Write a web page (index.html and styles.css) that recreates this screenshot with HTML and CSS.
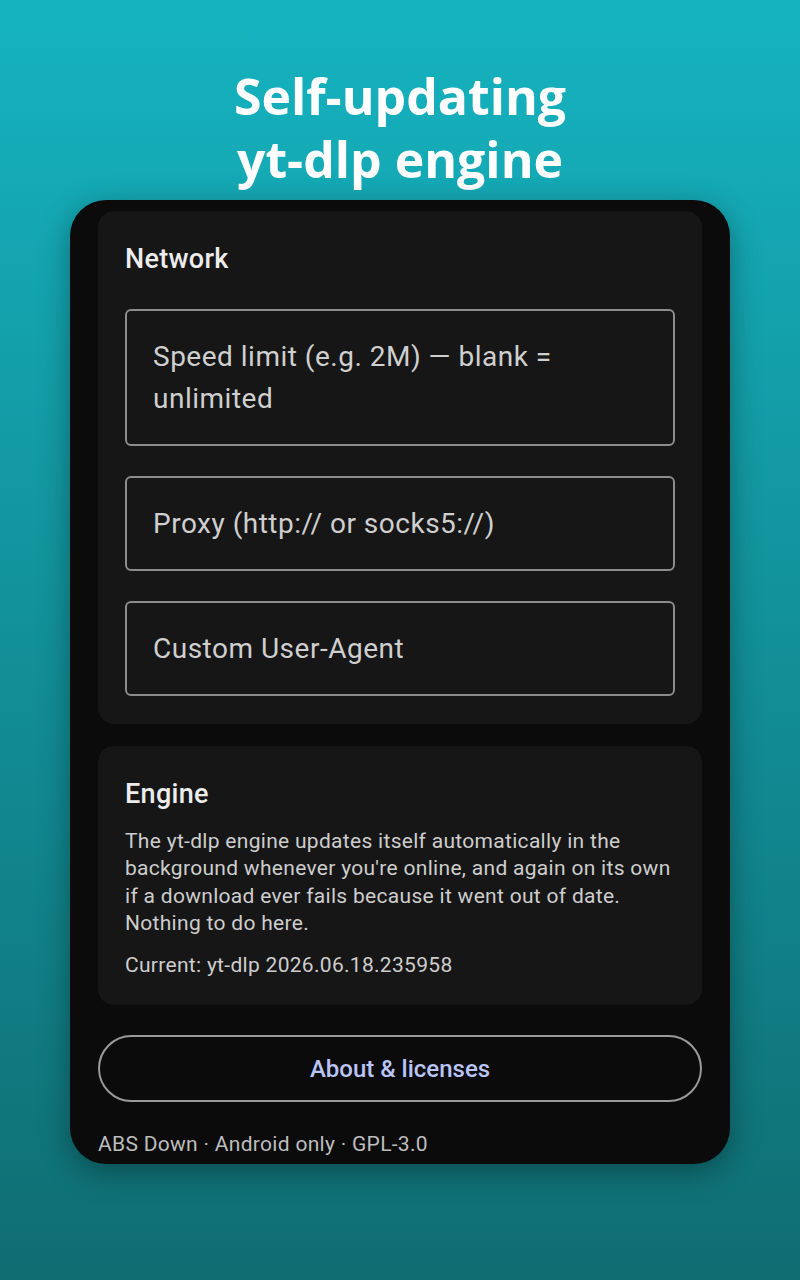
FILE: index.html
```html
<!DOCTYPE html>
<html lang="en">
<head>
    <meta charset="UTF-8">
    <meta name="viewport" content="width=device-width, initial-scale=1.0">
    <title>ABS Down - Settings</title>
    <link rel="stylesheet" href="styles.css">
</head>
<body>
    <h1 class="headline">Self-updating<br>yt-dlp engine</h1>

    <div class="screen">
        <section class="card">
            <h2 class="card-title">Network</h2>
            <div class="field">Speed limit (e.g. 2M) — blank = unlimited</div>
            <div class="field">Proxy (http:// or socks5://)</div>
            <div class="field">Custom User-Agent</div>
        </section>

        <section class="card">
            <h2 class="card-title">Engine</h2>
            <p class="card-text">The yt-dlp engine updates itself automatically in the background whenever you're online, and again on its own if a download ever fails because it went out of date. Nothing to do here.</p>
            <p class="card-text version">Current: yt-dlp 2026.06.18.235958</p>
        </section>

        <button class="outline-button">About &amp; licenses</button>

        <p class="footer">ABS Down · Android only · GPL-3.0</p>
    </div>
</body>
</html>
```

FILE: styles.css
```css
body {
    margin: 0;
    min-height: 1280px;
    background: linear-gradient(180deg, #15b3c0 0%, #0f6d72 100%);
    font-family: Roboto, "Noto Sans", sans-serif;
    display: flex;
    flex-direction: column;
    align-items: center;
}

.headline {
    margin: 65px 0 9px;
    font-family: "Open Sans", "Noto Sans", sans-serif;
    font-weight: 700;
    font-size: 50px;
    line-height: 63px;
    color: #fff;
    text-align: center;
}

.screen {
    width: 660px;
    box-sizing: border-box;
    padding: 11px 28px 6px;
    background-color: #0b0b0b;
    border-radius: 36px;
    box-shadow: 0 8px 30px rgba(0, 0, 0, 0.35);
    display: flex;
    flex-direction: column;
}

.card {
    background-color: #161616;
    border-radius: 16px;
    padding: 28px 27px;
    display: flex;
    flex-direction: column;
    gap: 30px;
}

.card + .card {
    margin-top: 22px;
    gap: 14px;
    padding-bottom: 26px;
}

.card-title {
    margin: 0;
    font-size: 27px;
    font-weight: 500;
    line-height: 40px;
    letter-spacing: 0.3px;
    color: #ececec;
}

.field {
    border: 2px solid #8c8c8c;
    border-radius: 6px;
    padding: 24.5px 26px;
    font-size: 28px;
    line-height: 42px;
    letter-spacing: 0.5px;
    color: #cfcfcf;
}

.card-text {
    margin: 0;
    font-size: 21px;
    line-height: 27.4px;
    letter-spacing: 0.3px;
    color: #cdcdcd;
}

.outline-button {
    margin-top: 30px;
    height: 67px;
    border: 2px solid #9a9a9a;
    border-radius: 34px;
    background: transparent;
    color: #b9c5f7;
    font-family: Roboto, "Noto Sans", sans-serif;
    font-size: 24px;
    font-weight: 500;
}

.footer {
    margin: 28px 0 0;
    font-size: 21px;
    line-height: 28px;
    letter-spacing: 0.3px;
    color: #bdbdbd;
}
```
